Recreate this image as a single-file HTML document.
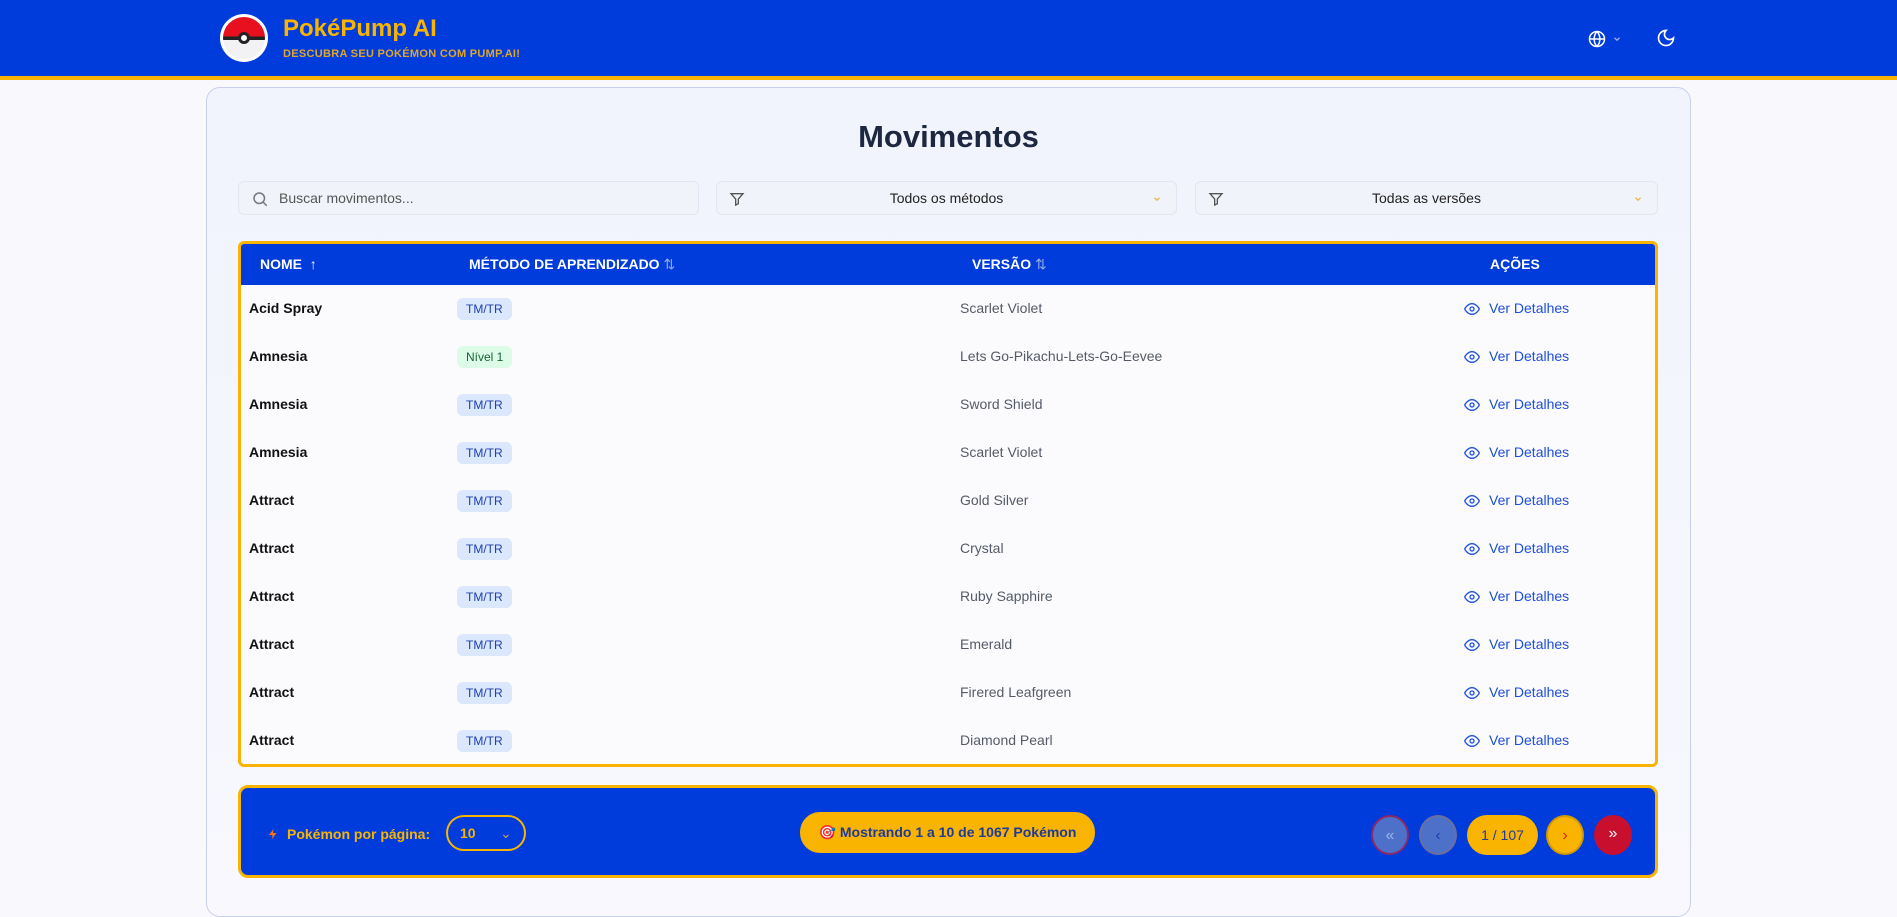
<!DOCTYPE html>
<html><head><meta charset="utf-8"><style>
*{box-sizing:border-box;margin:0;padding:0}
body{width:1897px;height:907px;overflow:hidden;background:#f8f8fd;font-family:"Liberation Sans",sans-serif;position:relative}
.hdr{position:absolute;left:0;top:0;width:1897px;height:80px;background:#003bdb;border-bottom:4px solid #f8b400}
.ball{position:absolute;left:220px;top:14px;width:48px;height:48px;border-radius:50%;background:#fff;padding:3px}
.ball .in{width:42px;height:42px;border-radius:50%;background:linear-gradient(#e8101e 0 47%,#222 47% 55%,#f2f2f4 55%);position:relative}
.ball .in:after{content:"";position:absolute;left:15px;top:15px;width:12px;height:12px;border-radius:50%;background:#fff;border:3px solid #222;box-sizing:border-box}
.t1{position:absolute;left:283px;top:15px;color:#f8b400;font-weight:bold;font-size:24px}
.t2{position:absolute;left:283px;top:48px;color:#e0a62a;font-weight:bold;font-size:11px;letter-spacing:.3px}
.card{position:absolute;left:206px;top:87px;width:1485px;height:830px;border:1px solid #c9d0ea;border-radius:14px;background:linear-gradient(180deg,#f1f4fd,#f8f8fe)}
h1{position:absolute;left:0;width:1897px;top:119px;text-align:center;font-size:31px;color:#1d2840}
.inp{position:absolute;top:181px;height:34px;border:1px solid #e2e6f0;border-radius:6px;background:#f1f3fa;font-size:14px;color:#222;line-height:32px}
.tbl{position:absolute;left:238px;top:241px;width:1420px;height:526px;border:3px solid #f8b400;border-radius:6px;background:#fbfbfe;overflow:hidden}
.th{height:41px;background:#003bdb;color:#fff;font-weight:bold;font-size:14px;position:relative}
.th span{position:absolute;top:12px}
.row{height:48px;position:relative;font-size:14px}
.row span{position:absolute;top:15px}
.b{font-weight:bold;color:#111}
.badge{position:absolute;top:13px;left:216px;height:22px;line-height:22px;padding:0 9px;border-radius:6px;background:#dbe7fc;color:#1e40af;font-size:12px}
.g{background:#dcfce7;color:#166534}
.v{left:719px;color:#555b66}
.a{left:1248px;color:#1d4ed8}
.eye{position:absolute;left:1223px;top:17px}
.pg{position:absolute;left:238px;top:785px;width:1420px;height:93px;border:3px solid #f8b400;border-radius:10px;background:#003bdb}
.circ{position:absolute;top:27px;width:38px;height:40px;border-radius:50%;text-align:center;line-height:38px;font-size:16px}
</style></head><body>
<div class="hdr">
<div class="ball"><div class="in"></div></div>
<div class="t1">PokéPump AI</div>
<div class="t2">DESCUBRA SEU POKÉMON COM PUMP.AI!</div>
<svg style="position:absolute;left:1588px;top:30px" width="18" height="18" viewBox="0 0 24 24" fill="none" stroke="#fff" stroke-width="2"><circle cx="12" cy="12" r="10"/><path d="M2 12h20M12 2a15 15 0 010 20M12 2a15 15 0 000 20"/></svg>
<svg style="position:absolute;left:1612px;top:34px" width="10" height="10" viewBox="0 0 24 24" fill="none" stroke="#9bb0f0" stroke-width="3"><path d="M6 9l6 6 6-6"/></svg>
<svg style="position:absolute;left:1656px;top:28px" width="20" height="20" viewBox="0 0 24 24" fill="none" stroke="#fff" stroke-width="2"><path d="M12 3a6 6 0 009 9 9 9 0 11-9-9z"/></svg>
</div>
<div class="card"></div>
<h1>Movimentos</h1>
<div class="inp" style="left:238px;width:461px;padding-left:40px;color:#555">Buscar movimentos...
<svg style="position:absolute;left:12px;top:8px" width="18" height="18" viewBox="0 0 24 24" fill="none" stroke="#777" stroke-width="2"><circle cx="11" cy="11" r="7"/><path d="M21 21l-5-5"/></svg></div>
<div class="inp" style="left:716px;width:461px;text-align:center">Todos os métodos
<svg style="position:absolute;left:12px;top:9px" width="16" height="16" viewBox="0 0 24 24" fill="none" stroke="#555" stroke-width="2"><path d="M3 4h18l-7 8v7l-4 2v-9z"/></svg>
<svg style="position:absolute;right:14px;top:12px" width="10" height="10" viewBox="0 0 24 24" fill="none" stroke="#e8b84a" stroke-width="3"><path d="M6 9l6 6 6-6"/></svg></div>
<div class="inp" style="left:1195px;width:463px;text-align:center">Todas as versões
<svg style="position:absolute;left:12px;top:9px" width="16" height="16" viewBox="0 0 24 24" fill="none" stroke="#555" stroke-width="2"><path d="M3 4h18l-7 8v7l-4 2v-9z"/></svg>
<svg style="position:absolute;right:14px;top:12px" width="10" height="10" viewBox="0 0 24 24" fill="none" stroke="#e8b84a" stroke-width="3"><path d="M6 9l6 6 6-6"/></svg></div>
<div class="tbl">
<div class="th"><span style="left:19px">NOME &nbsp;↑</span><span style="left:228px">MÉTODO DE APRENDIZADO <b style="color:#8fa6e8;font-weight:normal">⇅</b></span><span style="left:731px">VERSÃO <b style="color:#8fa6e8;font-weight:normal">⇅</b></span><span style="left:1249px">AÇÕES</span></div>
<div id="rows"></div>
</div>
<div class="pg">
<svg style="position:absolute;left:26px;top:38px" width="12" height="16" viewBox="0 0 24 24" fill="#f97316"><path d="M13 2L4 14h7l-1 8 9-12h-7z"/></svg>
<div style="position:absolute;left:46px;top:38px;color:#f8b400;font-weight:bold;font-size:14px">Pokémon por página:</div>
<div style="position:absolute;left:205px;top:27px;width:80px;height:36px;border:2px solid #f8b400;border-radius:18px;color:#f8b400;font-weight:bold;font-size:14px;line-height:32px;padding-left:12px">10 <span style="position:absolute;left:52px;font-weight:normal;color:#c9a34a">⌄</span></div>
<div style="position:absolute;left:559px;top:24px;width:295px;height:41px;border-radius:20px;background:#f8b400;color:#1e3a9a;font-weight:bold;font-size:14px;line-height:41px;text-align:center">🎯 Mostrando 1 a 10 de 1067 Pokémon</div>
<div class="circ" style="left:1130px;background:#4d71c8;border:2px solid #8a2a6a;color:#9db4ef">«</div>
<div class="circ" style="left:1178px;background:#4d71c8;border:2px solid #6a6fa0;color:#2040b0">‹</div>
<div style="position:absolute;left:1226px;top:27px;width:71px;height:40px;border-radius:20px;background:#f8b400;color:#1e3a9a;font-size:14px;line-height:40px;text-align:center">1 / 107</div>
<div class="circ" style="left:1305px;background:#f8b400;border:2px solid #d09a00;color:#e02020">›</div>
<div class="circ" style="left:1353px;background:#c8102e;color:#fff">»</div>
</div>
<script>
var d=[["Acid Spray","TM/TR","Scarlet Violet"],["Amnesia","Nível 1","Lets Go-Pikachu-Lets-Go-Eevee"],["Amnesia","TM/TR","Sword Shield"],["Amnesia","TM/TR","Scarlet Violet"],["Attract","TM/TR","Gold Silver"],["Attract","TM/TR","Crystal"],["Attract","TM/TR","Ruby Sapphire"],["Attract","TM/TR","Emerald"],["Attract","TM/TR","Firered Leafgreen"],["Attract","TM/TR","Diamond Pearl"]];
var eye='<svg class="eye" width="16" height="14" viewBox="0 0 24 20" fill="none" stroke="#1d4ed8" stroke-width="2"><path d="M1 10s4-8 11-8 11 8 11 8-4 8-11 8S1 10 1 10z"/><circle cx="12" cy="10" r="3"/></svg>';
document.getElementById('rows').innerHTML=d.map(r=>'<div class="row"><span class="b" style="left:8px">'+r[0]+'</span><div class="badge'+(r[1]=='TM/TR'?'':' g')+'">'+r[1]+'</div><span class="v">'+r[2]+'</span>'+eye+'<span class="a">Ver Detalhes</span></div>').join('');
</script>
</body></html>
